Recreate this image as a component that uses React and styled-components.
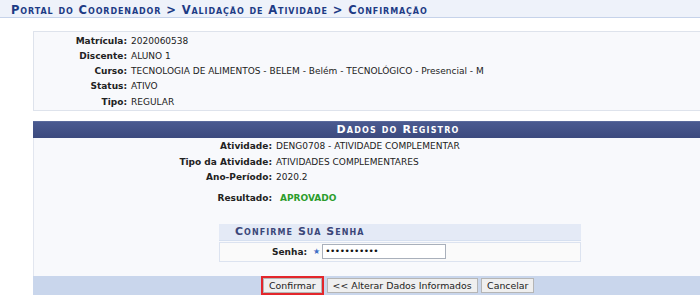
import React from "react";
import styled, { createGlobalStyle } from "styled-components";

const Global = createGlobalStyle`
  html, body { margin: 0; padding: 0; background: #fff; overflow: hidden; }
  body { font-family: "DejaVu Sans", Verdana, sans-serif; font-size: 9px; color: #222; }
  #root { width: 700px; height: 296px; overflow: hidden; }
`;

const Page = styled.div`
  width: 700px;
  height: 296px;
  overflow: hidden;
`;

const TitleBar = styled.h2`
  margin: 0;
  height: 18px;
  box-sizing: border-box;
  padding: 3px 0 0 11px;
  background: #eef2fa;
  border-bottom: 1px solid #c6d3ea;
  color: #1d3b85;
  font-size: 11.5px;
  font-weight: bold;
  font-variant: small-caps;
  letter-spacing: 0.9px;
  line-height: 14px;
  white-space: nowrap;
`;

const Content = styled.div`
  margin-left: 33px;
  width: 730px;
`;

const InfoBox = styled.div`
  margin-top: 13px;
  box-sizing: border-box;
  background: #f8f9fc;
  border: 1px solid #dee3ec;
  padding: 1.5px 0 0;
`;

const Row = styled.div`
  display: grid;
  grid-template-columns: ${(p) => p.$label}px 1fr;
  column-gap: ${(p) => p.$gap || 4}px;
  line-height: ${(p) => p.$lh || 15.25}px;
  margin-top: ${(p) => p.$mt || 0}px;
  white-space: nowrap;
`;

const Label = styled.span`
  text-align: right;
  font-weight: bold;
  color: #222;
`;

const Value = styled.span`
  color: #222;
`;

const Approved = styled.span`
  color: #2c9d2c;
  font-weight: bold;
`;

const FormTable = styled.div`
  margin-top: 10.5px;
  box-sizing: border-box;
  background: #f8f9fc;
  border-left: 1px solid #e2e6ef;
`;

const Caption = styled.div`
  height: 17px;
  background: linear-gradient(#4a5a90, #3c4a7e);
  border-top: 1px solid #5a6a9c;
  box-sizing: border-box;
  color: #fff;
  text-align: center;
  font-weight: bold;
  font-variant: small-caps;
  letter-spacing: 1.15px;
  font-size: 11px;
  line-height: 15px;
  margin-left: -1px;
`;

const Body = styled.div`
  padding-top: 1px;
  padding-bottom: 14px;
`;

const SubTable = styled.div`
  margin: 18px 0 0 185px;
  width: 362px;
`;

const SubCaption = styled.div`
  height: 17px;
  box-sizing: border-box;
  background: #e4eaf6;
  color: #3b4779;
  font-weight: bold;
  font-variant: small-caps;
  letter-spacing: 1.05px;
  font-size: 11px;
  line-height: 16px;
  padding-left: 16px;
  border-bottom: 1px solid #d6e0f0;
`;

const SubRow = styled.div`
  margin-top: 1px;
  height: 20px;
  box-sizing: border-box;
  background: #fafafa;
  border: 1px solid #dce3f0;
  display: flex;
  align-items: center;
  padding-left: 52px;
`;

const Star = styled.span`
  color: #3f6fc6;
  font-size: 8px;
  margin: 0 2px 0 6px;
`;

const Input = styled.div`
  width: 124px;
  height: 15px;
  box-sizing: border-box;
  background: #fff;
  border: 1px solid #a9b0bb;
  font-size: 9px;
  line-height: 13px;
  padding-left: 2px;
  letter-spacing: -0.5px;
  color: #111;
`;

const Footer = styled.div`
  height: 19px;
  background: #c9d6ec;
  display: flex;
  justify-content: center;
  align-items: center;
  gap: 3.5px;
  margin-left: -1px;
`;

const Button = styled.button`
  font-family: "DejaVu Sans", Verdana, sans-serif;
  font-size: 9.4px;
  height: 15px;
  margin: 0 ${(p) => (p.$focus ? 1.5 : 0)}px;
  padding: 0 5px;
  background: #efefef;
  color: #222;
  border: 1px solid #b5b5b5;
  outline: ${(p) => (p.$focus ? "2px solid #e3262b" : "none")};
  outline-offset: 0;
  border-radius: 0;
  line-height: 13px;
  cursor: pointer;
`;

export default function App() {
  return (
    <Page>
      <Global />
      <TitleBar>Portal do Coordenador &gt; Validação de Atividade &gt; Confirmação</TitleBar>
      <Content>
        <InfoBox>
          <Row $label={93}><Label>Matrícula:</Label><Value>2020060538</Value></Row>
          <Row $label={93}><Label>Discente:</Label><Value>ALUNO 1</Value></Row>
          <Row $label={93}><Label>Curso:</Label><Value>TECNOLOGIA DE ALIMENTOS - BELEM - Belém - TECNOLÓGICO - Presencial - M</Value></Row>
          <Row $label={93}><Label>Status:</Label><Value>ATIVO</Value></Row>
          <Row $label={93}><Label>Tipo:</Label><Value>REGULAR</Value></Row>
        </InfoBox>
        <FormTable>
          <Caption>Dados do Registro</Caption>
          <Body>
            <Row $label={238} $lh={15.6}><Label>Atividade:</Label><Value>DENG0708 - ATIVIDADE COMPLEMENTAR</Value></Row>
            <Row $label={238} $lh={15.6}><Label>Tipo da Atividade:</Label><Value>ATIVIDADES COMPLEMENTARES</Value></Row>
            <Row $label={238} $lh={15.6}><Label>Ano-Período:</Label><Value>2020.2</Value></Row>
            <Row $label={238} $gap={8} $lh={15} $mt={4.5}><Label>Resultado:</Label><Approved>APROVADO</Approved></Row>
            <SubTable>
              <SubCaption>Confirme Sua Senha</SubCaption>
              <SubRow>
                <Label>Senha:</Label>
                <Star>★</Star>
                <Input>•••••••••••</Input>
              </SubRow>
            </SubTable>
          </Body>
          <Footer>
            <Button $focus>Confirmar</Button>
            <Button>&lt;&lt; Alterar Dados Informados</Button>
            <Button>Cancelar</Button>
          </Footer>
        </FormTable>
      </Content>
    </Page>
  );
}
